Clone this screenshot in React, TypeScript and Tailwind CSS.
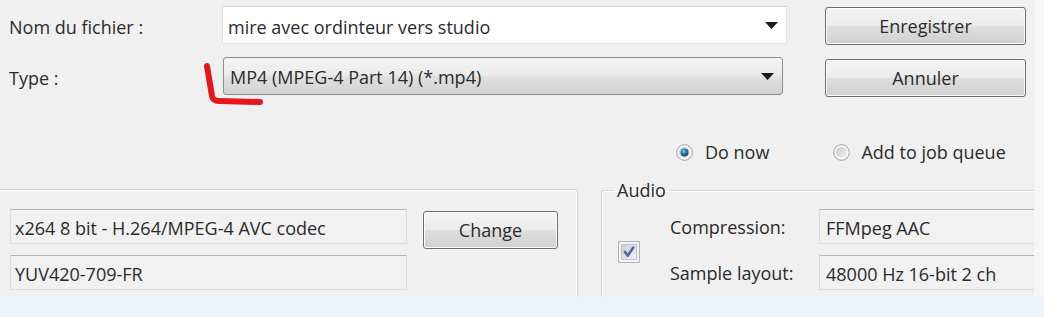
import React from "react";

function Arrow() {
  return (
    <svg width="13" height="7" viewBox="0 0 13 7" className="shrink-0">
      <polygon points="0,0 13,0 6.5,7" fill="#1a1a1a" />
    </svg>
  );
}

function Radio({ checked }: { checked?: boolean }) {
  return (
    <svg width="17" height="17" viewBox="0 0 17 17" className="shrink-0">
      <defs>
        <linearGradient id={checked ? "rgA" : "rgB"} x1="0" y1="0" x2="1" y2="1">
          <stop offset="0" stopColor="#c9c9c9" />
          <stop offset="1" stopColor="#f4f4f4" />
        </linearGradient>
        <radialGradient id="dot" cx="0.4" cy="0.35" r="0.7">
          <stop offset="0" stopColor="#7fd0f0" />
          <stop offset="0.45" stopColor="#2a7db0" />
          <stop offset="1" stopColor="#0d3f63" />
        </radialGradient>
      </defs>
      <circle cx="8.5" cy="8.5" r="7.8" fill="#fdfdfd" stroke="#9a9a9a" strokeWidth="1" />
      <circle cx="8.5" cy="8.5" r="5.8" fill={`url(#${checked ? "rgA" : "rgB"})`} />
      {checked && <circle cx="8.5" cy="8.5" r="4" fill="url(#dot)" />}
    </svg>
  );
}

function Checkbox() {
  return (
    <svg width="22" height="22" viewBox="0 0 22 22" className="shrink-0">
      <defs>
        <linearGradient id="cb" x1="0" y1="0" x2="1" y2="1">
          <stop offset="0" stopColor="#c6ccd6" />
          <stop offset="1" stopColor="#f1f3f7" />
        </linearGradient>
      </defs>
      <rect x="0.5" y="0.5" width="21" height="21" fill="#f2f2f2" stroke="#b4b4b4" />
      <rect x="3.5" y="3.5" width="15" height="15" fill="url(#cb)" stroke="#c2c7cf" />
      <path d="M7 11 L9.8 14.6 L15.2 6.5" stroke="#4d66a4" strokeWidth="2.6" fill="none" strokeLinecap="round" strokeLinejoin="round" />
    </svg>
  );
}

function Button({ label, className }: { label: string; className: string }) {
  return (
    <div
      className={`flex items-center justify-center rounded-[3px] border border-[#707070] bg-[linear-gradient(to_bottom,#f3f3f3_0%,#ececec_48%,#dedede_52%,#d0d0d0_100%)] shadow-[inset_0_0_0_1px_#fbfbfb] ${className}`}
    >
      {label}
    </div>
  );
}

function Field({ text, className }: { text: string; className: string }) {
  return (
    <div
      className={`flex items-center shrink-0 pl-[4px] pt-[2px] h-[35px] bg-[#f1f1f1] border border-[#dcdcdc] border-t-[#b4b4b4] whitespace-nowrap overflow-hidden ${className}`}
    >
      {text}
    </div>
  );
}

export default function App() {
  return (
    <div className="w-[1044px] h-[317px] flex flex-col bg-[#edf1f8] font-['Open_Sans',sans-serif] text-[18px] leading-none text-[#2b2b2b] overflow-hidden">
      <div className="flex h-[297px]">
        <div className="relative w-[1034px] bg-[#f0f0f0] flex flex-col overflow-hidden">
          {/* file name / type rows */}
          <div className="flex pt-[6px]">
            <div className="flex flex-col gap-[13px]">
              <div className="flex items-center h-[38px]">
                <span className="w-[222px] pl-[9px] pt-[4px]">Nom du fichier :</span>
                <div className="flex items-center justify-between w-[565px] h-[38px] bg-white border border-[#e2e2e2] border-t-[#cfcfcf] pl-[5px] pr-[8px]">
                  <span className="pt-[3px]">mire avec ordinteur vers studio</span>
                  <Arrow />
                </div>
              </div>
              <div className="flex items-center h-[38px]">
                <span className="w-[223px] pl-[9px] pt-[3px]">Type :</span>
                <div className="flex items-center justify-between w-[560px] h-[38px] rounded-[3px] border border-[#8e8e8e] bg-[linear-gradient(to_bottom,#f4f4f4_0%,#ececec_45%,#dfdfdf_55%,#d2d2d2_100%)] pl-[6px] pr-[8px]">
                  <span className="pt-[2px]">MP4 (MPEG-4 Part 14) (*.mp4)</span>
                  <Arrow />
                </div>
              </div>
            </div>
            <div className="ml-[38px] flex flex-col gap-[14px] pt-[1px]">
              <Button label="Enregistrer" className="w-[201px] h-[38px]" />
              <Button label="Annuler" className="w-[201px] h-[38px]" />
            </div>
          </div>

          {/* radios */}
          <div className="flex items-center h-[24px] mt-[43px] pl-[676px]">
            <Radio checked />
            <span className="ml-[12px]">Do now</span>
            <span className="ml-[64px]">
              <Radio />
            </span>
            <span className="ml-[11px]">Add to job queue</span>
          </div>

          {/* group boxes */}
          <div className="flex flex-1 mt-[15px] gap-[23px]">
            <div className="w-[578px] mt-[10px] border-t border-r border-[#d5d5d5] rounded-tr-[3px] shadow-[inset_-1px_1px_0_#ffffff] flex flex-col pt-[19px] pl-[10px]">
              <div className="flex items-start gap-[16px]">
                <div className="flex flex-col gap-[11px]">
                  <Field text="x264 8 bit - H.264/MPEG-4 AVC codec" className="w-[397px]" />
                  <Field text="YUV420-709-FR" className="w-[397px]" />
                </div>
                <Button label="Change" className="mt-[2px] w-[135px] h-[38px]" />
              </div>
            </div>
            <fieldset className="flex-1 border-t border-l border-[#d5d5d5] rounded-tl-[3px] shadow-[inset_1px_1px_0_#ffffff] min-w-0">
              <legend className="ml-[12px] px-[3px] py-[1px] leading-[20px]">Audio</legend>
              <div className="flex items-center pt-[8px] overflow-hidden">
                <div className="shrink-0 pl-[16px] pr-[30px] pt-[4px]">
                  <Checkbox />
                </div>
                <div className="flex flex-col shrink-0 gap-[11px] w-[149px]">
                  <span className="h-[35px] flex items-center">Compression:</span>
                  <span className="h-[35px] flex items-center">Sample layout:</span>
                </div>
                <div className="flex flex-col shrink-0 gap-[11px]">
                  <Field text="FFMpeg AAC" className="w-[240px] pl-[6px]" />
                  <Field text="48000 Hz 16-bit 2 ch" className="w-[240px] pl-[6px]" />
                </div>
              </div>
            </fieldset>
          </div>

          {/* red annotation stroke */}
          <svg className="absolute left-0 top-0 pointer-events-none" width="300" height="120" viewBox="0 0 300 120">
            <path d="M207 66 L212 96 Q213 101 219 101 L260 102" stroke="#e5161d" strokeWidth="6" fill="none" strokeLinecap="round" strokeLinejoin="round" />
          </svg>
        </div>
        <div className="w-[10px] bg-[#f4f6fa]" />
      </div>
      <div className="h-[20px] bg-[#edf1f8]" />
    </div>
  );
}
